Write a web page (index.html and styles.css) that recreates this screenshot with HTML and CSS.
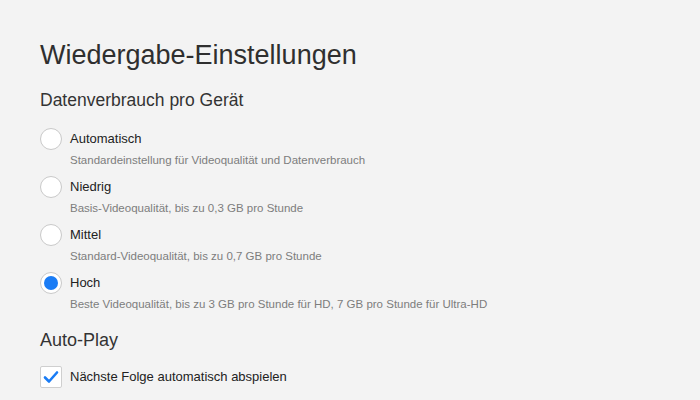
FILE: index.html
```html
<!DOCTYPE html>
<html lang="de">
<head>
    <meta charset="UTF-8">
    <meta name="viewport" content="width=device-width, initial-scale=1.0">
    <title>Wiedergabe-Einstellungen</title>
    <link rel="stylesheet" href="styles.css">
</head>
<body>
    <div class="page">
        <h1>Wiedergabe-Einstellungen</h1>

        <h2>Datenverbrauch pro Gerät</h2>
        <div class="options">
            <div class="option">
                <div class="option-row">
                    <span class="radio"></span>
                    <span class="label">Automatisch</span>
                </div>
                <div class="desc">Standardeinstellung für Videoqualität und Datenverbrauch</div>
            </div>
            <div class="option">
                <div class="option-row">
                    <span class="radio"></span>
                    <span class="label">Niedrig</span>
                </div>
                <div class="desc">Basis-Videoqualität, bis zu 0,3 GB pro Stunde</div>
            </div>
            <div class="option">
                <div class="option-row">
                    <span class="radio"></span>
                    <span class="label">Mittel</span>
                </div>
                <div class="desc">Standard-Videoqualität, bis zu 0,7 GB pro Stunde</div>
            </div>
            <div class="option">
                <div class="option-row">
                    <span class="radio checked"></span>
                    <span class="label">Hoch</span>
                </div>
                <div class="desc">Beste Videoqualität, bis zu 3 GB pro Stunde für HD, 7 GB pro Stunde für Ultra-HD</div>
            </div>
        </div>

        <h3>Auto-Play</h3>
        <div class="option-row">
            <span class="checkbox">
                <svg width="16" height="14" viewBox="0 0 16 14">
                    <path d="M2 7.5 L6 11.5 L14 2.5" fill="none" stroke="#1a7cf5" stroke-width="2.6" stroke-linecap="round" stroke-linejoin="round"/>
                </svg>
            </span>
            <span class="label">Nächste Folge automatisch abspielen</span>
        </div>
    </div>
</body>
</html>
```

FILE: styles.css
```css
body {
    margin: 0;
    background-color: #f3f3f3;
    font-family: "Liberation Sans", Arial, sans-serif;
    color: #333;
}
.page {
    padding: 37px 40px 0 40px;
}
h1 {
    margin: 0;
    font-size: 27px;
    line-height: 36px;
    font-weight: normal;
    color: #2f2f2f;
}
h2 {
    margin: 16px 0 0 0;
    font-size: 17.5px;
    line-height: 22px;
    font-weight: normal;
    color: #333;
}
h3 {
    margin: 16px 0 14px 0;
    font-size: 18px;
    line-height: 24px;
    font-weight: normal;
    color: #333;
}
.options {
    margin-top: 17px;
    display: flex;
    flex-direction: column;
    gap: 8px;
}
.option-row {
    display: flex;
    align-items: center;
    gap: 8px;
    height: 22px;
}
.label {
    font-size: 13px;
    line-height: 22px;
    color: #222;
}
.desc {
    margin: 2px 0 0 30px;
    font-size: 11.5px;
    line-height: 16px;
    color: #7d7d7d;
}
.radio {
    width: 20px;
    height: 20px;
    border: 1px solid #c9c9c9;
    border-radius: 50%;
    background: #fff;
    display: flex;
    align-items: center;
    justify-content: center;
    flex-shrink: 0;
}
.radio.checked::after {
    content: "";
    width: 14px;
    height: 14px;
    border-radius: 50%;
    background: #1a7cf5;
}
.checkbox {
    width: 20px;
    height: 20px;
    border: 1px solid #cfcfcf;
    border-radius: 2px;
    background: #fff;
    display: flex;
    align-items: center;
    justify-content: center;
    flex-shrink: 0;
}
```
